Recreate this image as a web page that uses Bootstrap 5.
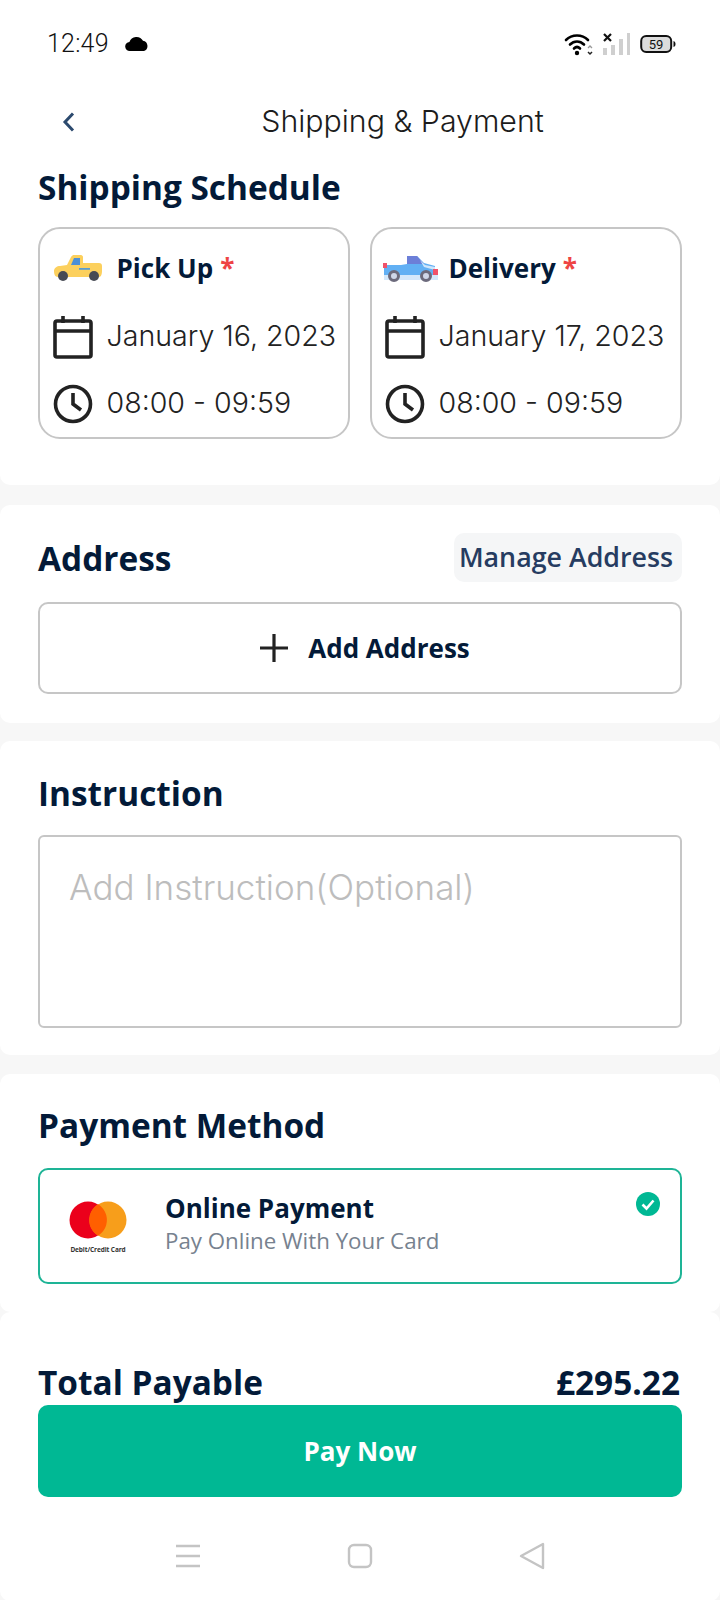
<!DOCTYPE html>
<html lang="en">
<head>
  <meta charset="UTF-8">
  <meta name="viewport" content="width=device-width, initial-scale=1.0">
  <title>Shipping &amp; Payment</title>
  <link href="https://cdn.jsdelivr.net/npm/bootstrap@5.3.0/dist/css/bootstrap.min.css" rel="stylesheet">
  <style>
    body { width: 720px; height: 1600px; overflow: hidden; background: #f7f7f7; font-family: "Open Sans", sans-serif; color: #031a38; }
    .sheet { background: #fff; border-radius: 10px; padding: 0 38px; }
    .sheet-top { height: 485px; border-radius: 0 0 10px 10px; }
    .sheet-address { height: 218px; margin-top: 20px; padding-top: 28px; }
    .sheet-note { height: 314px; margin-top: 18px; padding-top: 30px; }
    .sheet-pay { height: 238px; margin-top: 19px; padding-top: 29px; }
    .sheet-total { height: 289px; padding-top: 48px; }
    .clock-bar { height: 88px; padding: 0 6px 0 9px; }
    .clock-text { font-family: "Roboto", sans-serif; font-weight: 300; font-size: 25px; letter-spacing: .2px; color: #111; }
    .title-bar { height: 68px; }
    .title-text { font-family: "Inter", sans-serif; font-weight: 300; font-size: 30.3px; color: #1c1c1c; margin-left: 15px; flex: 1; text-align: center; padding-left: 32px; }
    .head-text { font-size: 33.4px; font-weight: 700; line-height: 44px; margin: 0; color: #031a38; }
    .head-first { margin-top: 9px; }
    .slot-wrap { margin-top: 18px; }
    .slot-box { width: 312px; height: 212px; border: 2px solid #c6c6c6; border-radius: 22px; padding: 0 0 0 12.5px; }
    .slot-head { height: 74px; padding-top: 4px; }
    .slot-name { font-size: 26px; font-weight: 700; margin-left: 14px; color: #031a38; }
    .slot-name-blue { margin-left: 11px; }
    .slot-star { color: #ee4444; margin-left: 7px; font-size: 26px; font-weight: 700; }
    .truck-blue { margin-left: -3px; }
    .slot-row { height: 67px; gap: 14px; }
    .slot-text { font-family: "Inter", sans-serif; font-weight: 300; font-size: 28.6px; color: #222; white-space: nowrap; }
    .manage-pill { width: 228px; height: 49px; padding-right: 4px; background: #f5f6f7; border-radius: 10px; font-size: 26.8px; font-weight: 600; color: #263c61; }
    .add-box { height: 92px; margin-top: 20px; padding-left: 9px; border: 2px solid #c6c6c6; border-radius: 10px; gap: 19px; font-size: 26px; font-weight: 700; }
    .note-box { height: 193px; margin-top: 20px; border: 2px solid #c6c6c6; border-radius: 6px; padding: 29px 29px; font-family: "Inter", sans-serif; font-weight: 300; font-size: 35px; line-height: 42px; color: #bdbdbd; }
    .pay-box { height: 116px; margin-top: 21px; border: 2px solid #1eb496; border-radius: 10px; padding: 0 20px 0 29px; }
    .pay-logo { width: 58px; margin-right: 38px; margin-top: 2px; gap: 6px; }
    .pay-logo-text { font-size: 6.5px; font-weight: 700; color: #333; white-space: nowrap; letter-spacing: -.1px; line-height: 9px; }
    .pay-text { margin-top: -7px; }
    .pay-name { font-size: 26px; font-weight: 700; line-height: 36px; }
    .pay-sub { font-size: 22.3px; color: #77828f; line-height: 30px; }
    .pay-tick { margin-top: -44px; }
    .total-line { height: 45px; padding-right: 2px; font-size: 33.4px; font-weight: 700; }
    .pay-btn { height: 92px; background: #00b894; border: 0; border-radius: 10px; color: #fff; font-size: 26px; font-weight: 700; }
    .pay-btn:hover { background: #00b894; color: #fff; }
    .nav-bar { height: 60px; margin-top: 29px; padding: 0 137px; }
  </style>
</head>
<body>
  <div class="sheet sheet-top">
    <div class="clock-bar d-flex align-items-center justify-content-between">
      <div class="d-flex align-items-center gap-3">
        <span class="clock-text">12:49</span>
        <svg width="24" height="16" viewBox="0 0 24 16"><path d="M5 15a4.500 4.500 0 0 1-.6-9A7.500 7.500 0 0 1 18 4.800a5.300 5.300 0 0 1 1 10.200z" fill="#000"/></svg>
      </div>
      <div class="d-flex align-items-center gap-2">
        <svg width="30" height="24" viewBox="0 0 30 24"><g fill="none" stroke="#000" stroke-width="2.600" stroke-linecap="round"><path d="M2 8c6-6 16-6 22 0"/><path d="M6 12.500c4-4 10-4 14 0"/><path d="M10 16.500c2-2 4-2 6 0"/></g><circle cx="13" cy="21" r="2.200" fill="#000"/><path d="M24 16l2-2 2 2" fill="none" stroke="#999" stroke-width="1.300"/><path d="M24 20l2 2 2-2" fill="none" stroke="#222" stroke-width="1.500"/></svg>
        <svg width="30" height="24" viewBox="0 0 30 24"><path d="M2 2l7 7M9 2l-7 7" stroke="#111" stroke-width="2.200"/><g fill="#cfcfcf"><rect x="1" y="16" width="4" height="7"/><rect x="9" y="13" width="4" height="10"/><rect x="17" y="7" width="4" height="16"/><rect x="25" y="1" width="3" height="22"/></g></svg>
        <svg width="36" height="20" viewBox="0 0 36 20"><rect x="1.200" y="2" width="30" height="16" rx="5" fill="#dcdcdc" stroke="#111" stroke-width="2"/><path d="M33.500 7v6c1.500-.5 2-1.500 2-3s-.5-2.500-2-3z" fill="#111"/><text x="16" y="15" text-anchor="middle" font-family="Roboto, sans-serif" font-size="13" fill="#111">59</text></svg>
      </div>
    </div>
    <div class="title-bar d-flex align-items-center">
      <svg class="ms-4" width="14" height="22" viewBox="0 0 14 22"><path d="M11 2.500L3 11l8 8.500" fill="none" stroke="#2c4a6e" stroke-width="3"/></svg>
      <div class="title-text">Shipping &amp; Payment</div>
    </div>
    <h2 class="head-text head-first">Shipping Schedule</h2>
    <div class="slot-wrap d-flex justify-content-between">
      <div class="slot-box">
        <div class="slot-head d-flex align-items-center">
          <svg width="50" height="28" viewBox="0 0 50 28"><path d="M1 17c0-3 3-5 6-5l7-1 4-8c1-1.500 2-2 3-2h7c1 0 2 1 2 2v6h16c2 0 3 1 3 3v5c0 3-1 6-3 6H5c-3 0-4-3-4-6z" fill="#fcd05d"/><path d="M21 4h6v7h-9z" fill="#4c8fd6"/><rect x="26" y="14" width="11" height="1.800" fill="#5a9ccf"/><circle cx="10" cy="22" r="5" fill="#474a54"/><circle cx="41" cy="22" r="5" fill="#474a54"/></svg>
          <span class="slot-name">Pick Up</span><span class="slot-star">*</span>
        </div>
        <div class="slot-row d-flex align-items-center">
          <svg width="40" height="44" viewBox="0 0 40 44"><g fill="none" stroke="#222" stroke-width="3.600"><rect x="2" y="6" width="36" height="36" rx="2"/><path d="M2 16h36M10 1v7M30 1v7"/></g></svg>
          <span class="slot-text">January 16, 2023</span>
        </div>
        <div class="slot-row d-flex align-items-center">
          <svg width="40" height="40" viewBox="0 0 40 40"><g fill="none" stroke="#222" stroke-width="3.600"><circle cx="20" cy="20" r="17.500"/><path d="M20 9v11l8 6"/></g></svg>
          <span class="slot-text">08:00 - 09:59</span>
        </div>
      </div>
      <div class="slot-box">
        <div class="slot-head d-flex align-items-center">
          <svg class="truck-blue" width="56" height="28" viewBox="0 0 56 28"><path d="M2 11h17l6-1V2h10l7 7 11 3v11H2z" fill="#62b0f4"/><path d="M25 2h10l7 8H25z" fill="#6c7fd8"/><path d="M38 6l5 5 10 2v3l-11-3z" fill="#cfe6fb"/><rect x="2" y="21" width="54" height="5" fill="#d4e8fb"/><rect x="1" y="9" width="4" height="5" fill="#f0526a"/><rect x="51" y="15" width="5" height="6" fill="#f0526a"/><g fill="#cfd6e8" stroke="#6c6a7c" stroke-width="3"><circle cx="12" cy="22" r="4.500"/><circle cx="44" cy="22" r="4.500"/></g></svg>
          <span class="slot-name slot-name-blue">Delivery</span><span class="slot-star">*</span>
        </div>
        <div class="slot-row d-flex align-items-center">
          <svg width="40" height="44" viewBox="0 0 40 44"><g fill="none" stroke="#222" stroke-width="3.600"><rect x="2" y="6" width="36" height="36" rx="2"/><path d="M2 16h36M10 1v7M30 1v7"/></g></svg>
          <span class="slot-text">January 17, 2023</span>
        </div>
        <div class="slot-row d-flex align-items-center">
          <svg width="40" height="40" viewBox="0 0 40 40"><g fill="none" stroke="#222" stroke-width="3.600"><circle cx="20" cy="20" r="17.500"/><path d="M20 9v11l8 6"/></g></svg>
          <span class="slot-text">08:00 - 09:59</span>
        </div>
      </div>
    </div>
  </div>

  <div class="sheet sheet-address">
    <div class="d-flex align-items-center justify-content-between">
      <h2 class="head-text">Address</h2>
      <div class="manage-pill d-flex align-items-center justify-content-center">Manage Address</div>
    </div>
    <div class="add-box d-flex align-items-center justify-content-center">
      <svg width="30" height="30" viewBox="0 0 30 30"><path d="M15 1v28M1 15h28" stroke="#222" stroke-width="3.200"/></svg>
      <span>Add Address</span>
    </div>
  </div>

  <div class="sheet sheet-note">
    <h2 class="head-text">Instruction</h2>
    <div class="note-box">Add Instruction(Optional)</div>
  </div>

  <div class="sheet sheet-pay">
    <h2 class="head-text">Payment Method</h2>
    <div class="pay-box d-flex align-items-center">
      <div class="pay-logo d-flex flex-column align-items-center">
        <svg width="58" height="38" viewBox="0 0 58 38"><circle cx="19" cy="19" r="18.500" fill="#eb001b"/><circle cx="39" cy="19" r="18.500" fill="#f79e1b"/><path d="M29 3.200a18.500 18.500 0 0 1 0 31.600a18.500 18.500 0 0 1 0-31.600z" fill="#ff5f00"/></svg>
        <span class="pay-logo-text">Debit/Credit Card</span>
      </div>
      <div class="pay-text flex-grow-1">
        <div class="pay-name">Online Payment</div>
        <div class="pay-sub">Pay Online With Your Card</div>
      </div>
      <svg class="pay-tick" width="24" height="24" viewBox="0 0 24 24"><circle cx="12" cy="12" r="12" fill="#00b894"/><path d="M6.500 12.500l4 4 7-8" fill="none" stroke="#fff" stroke-width="2.600"/></svg>
    </div>
  </div>

  <div class="sheet sheet-total">
    <div class="total-line d-flex justify-content-between align-items-center">
      <span>Total Payable</span><span>£295.22</span>
    </div>
    <button class="btn pay-btn w-100">Pay Now</button>
    <div class="nav-bar d-flex align-items-center justify-content-between">
      <svg width="26" height="26" viewBox="0 0 26 26"><path d="M1 3h24M1 13h24M1 23h24" stroke="#c4c4c4" stroke-width="2.400"/></svg>
      <svg width="26" height="26" viewBox="0 0 26 26"><rect x="2" y="2" width="22" height="22" rx="5" fill="none" stroke="#c4c4c4" stroke-width="2.400"/></svg>
      <svg width="26" height="28" viewBox="0 0 26 28"><path d="M24 2v24L2 14z" fill="none" stroke="#c4c4c4" stroke-width="2.400" stroke-linejoin="round"/></svg>
    </div>
  </div>
</body>
</html>
